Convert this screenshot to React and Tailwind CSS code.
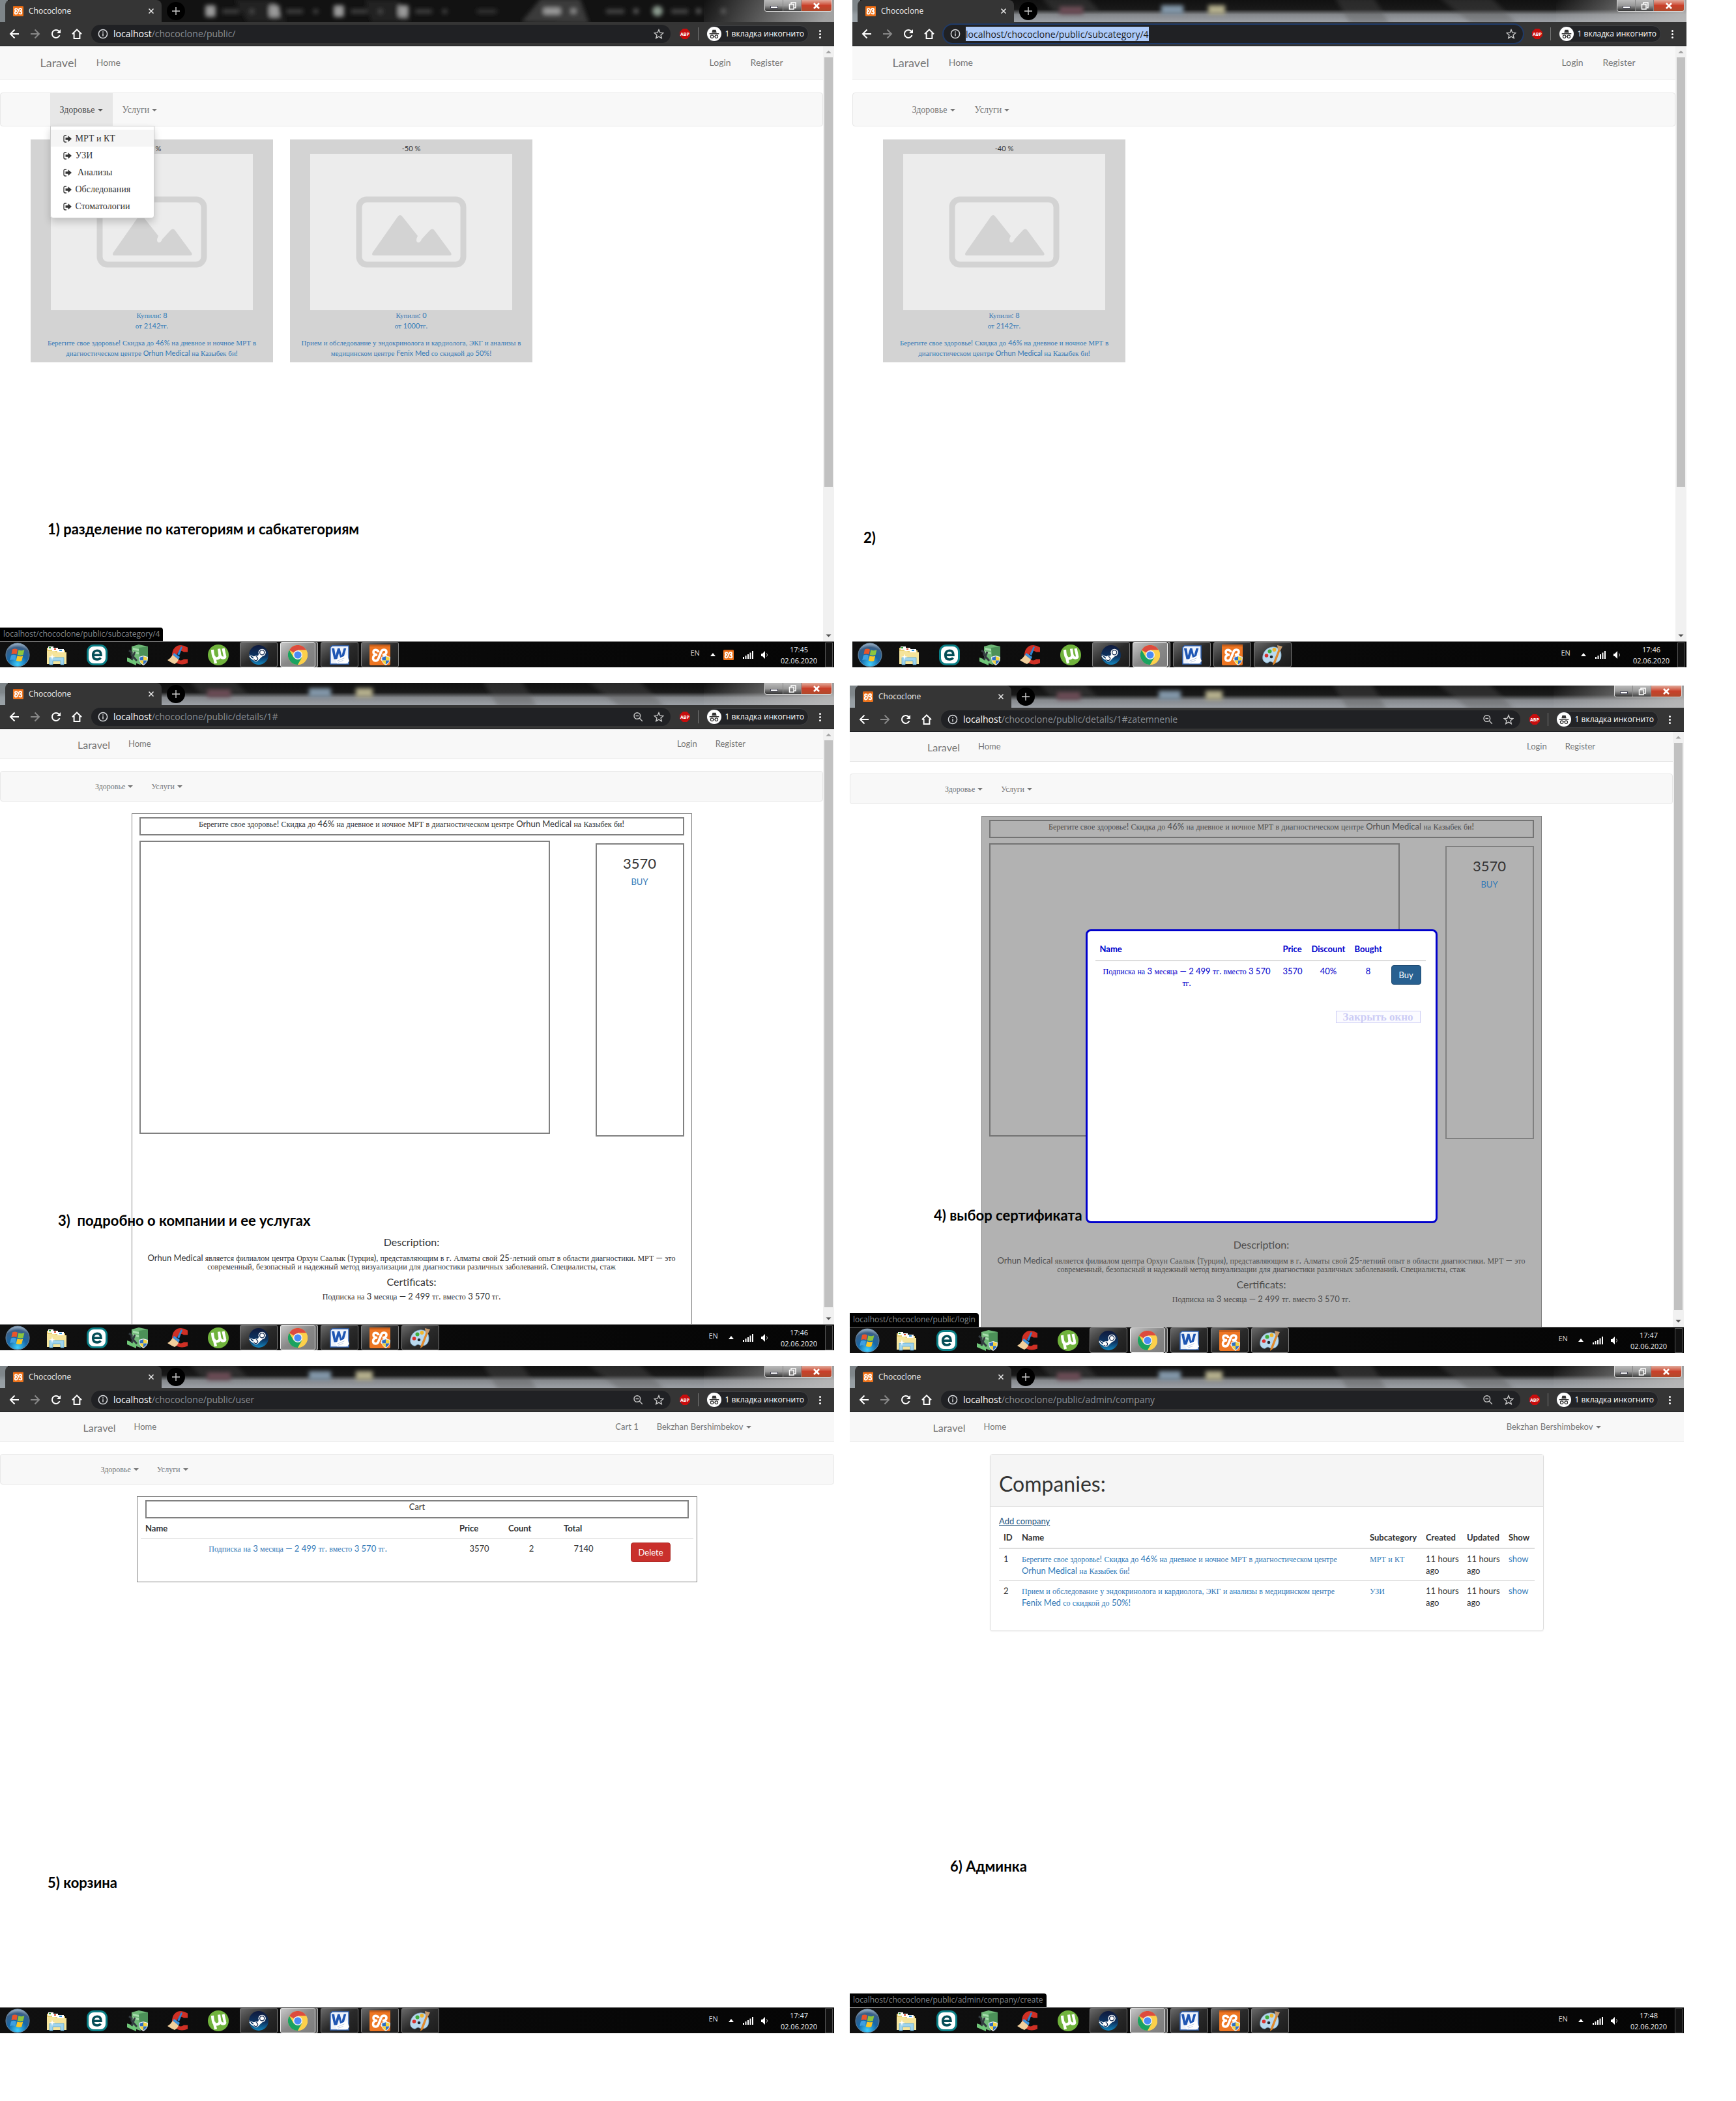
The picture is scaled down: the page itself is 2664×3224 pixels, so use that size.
import React from "react";

const SERIF = "font-['Liberation_Serif',serif]";

/* Cyrillic runs use the serif face, everything else inherits the page face. */
function Mixed({ small, children }) {
  return String(children)
    .split(/([А-Яа-яЁё]+)/)
    .map((part, i) =>
      i % 2 ? (
        <span key={i} className={small ? SERIF + " text-[12px] leading-none" : SERIF}>
          {part}
        </span>
      ) : (
        part
      )
    );
}

/* ---------- browser glyphs ---------- */

function Xampp({ className }) {
  return (
    <svg viewBox="0 0 32 32" className={className} aria-hidden="true">
      <rect width="32" height="32" rx="3" fill="#ee741c" />
      <rect x="2" y="1" width="28" height="3" fill="#c9540c" opacity=".7" />
      <path
        d="M14 12C13 7 6 7 6 11.500c0 3 3 4 6 4.300C8 16 5.500 18 5.500 21c0 5 6.500 5 8 1L18 11c1.500-4 8-4 8 .5 0 3-3 4-6 4.300 4 .2 6.500 2 6.500 5.200 0 5-6.500 5-8 .5"
        fill="none"
        stroke="#fff"
        strokeWidth="3.800"
      />
    </svg>
  );
}

const line = { fill: "none", stroke: "currentColor", strokeWidth: 2 };

function Back({ className }) {
  return (
    <svg viewBox="0 0 16 16" className={className} {...line}>
      <path d="M15 8H2.500M8.500 1.500 2 8l6.500 6.500" />
    </svg>
  );
}
function Forward({ className }) {
  return (
    <svg viewBox="0 0 16 16" className={className} {...line}>
      <path d="M1 8h12.500M7.500 1.500 14 8l-6.500 6.500" />
    </svg>
  );
}
function Reload({ className }) {
  return (
    <svg viewBox="0 0 16 16" className={className} {...line}>
      <path d="M13.500 10.200A6 6 0 1 1 12.300 3.800L14 5.500" />
      <path d="M15 1v6H9z" fill="currentColor" stroke="none" />
    </svg>
  );
}
function Home({ className }) {
  return (
    <svg viewBox="0 0 16 16" className={className} {...line}>
      <path d="M1 8.200 8 1.400l7 6.800M3.600 7v8h8.800V7" />
    </svg>
  );
}
function Info({ className }) {
  return (
    <svg viewBox="0 0 16 16" className={className} fill="none" stroke="currentColor" strokeWidth="1.500">
      <circle cx="8" cy="8" r="6.600" />
      <path d="M8 7.200v4.300M8 4.300v1.600" />
    </svg>
  );
}
function ZoomOut({ className }) {
  return (
    <svg viewBox="0 0 16 16" className={className} fill="none" stroke="currentColor" strokeWidth="1.400">
      <circle cx="6.800" cy="6.500" r="4.800" />
      <path d="M4.500 6.500h4.600M10.300 10l4.500 4.700" />
    </svg>
  );
}
function Star({ className }) {
  return (
    <svg viewBox="0 0 16 16" className={className} fill="none" stroke="currentColor" strokeWidth="1.400">
      <path d="m8 1.600 1.900 4.600 4.900.4-3.700 3.200 1.100 4.800L8 12.100l-4.200 2.500 1.100-4.800L1.200 6.600l4.900-.4z" />
    </svg>
  );
}
function Incognito({ className }) {
  return (
    <svg viewBox="0 0 24 24" className={className} aria-hidden="true">
      <circle cx="12" cy="12" r="12" fill="#fff" />
      <path d="M8 10.200 9.200 5.200h5.600l1.200 5zM4 11h16v1.500H4z" fill="#333" />
      <g fill="none" stroke="#333" strokeWidth="1.300">
        <circle cx="8.300" cy="16.500" r="2.400" />
        <circle cx="15.700" cy="16.500" r="2.400" />
        <path d="M10.700 16.200q1.300-.8 2.600 0" />
      </g>
    </svg>
  );
}

function Glass({ tabs }) {
  return (
    <svg
      viewBox="0 0 1280 34"
      preserveAspectRatio="none"
      className="absolute inset-0 h-full w-full"
      aria-hidden="true"
    >
      <defs>
        <linearGradient id="glassShade" x1="0" y1="0" x2="0" y2="1">
          <stop offset="0" stopColor="#111" />
          <stop offset=".42" stopColor="#191919" />
          <stop offset=".66" stopColor="#85888c" />
          <stop offset="1" stopColor="#9da1a7" />
        </linearGradient>
        <linearGradient id="glassEnd" x1="0" x2="1" y1="0" y2=".1">
          <stop offset="0" stopColor="#bbb" stopOpacity="0" />
          <stop offset="1" stopColor="#bbb" stopOpacity=".85" />
        </linearGradient>
        <filter id="soft" x="-50%" y="-50%" width="200%" height="200%">
          <feGaussianBlur stdDeviation="3" />
        </filter>
      </defs>
      <rect width="1280" height="34" fill={tabs ? "#121212" : "url(#glassShade)"} />
      {tabs ? (
        <g filter="url(#soft)">
          <path d="M800 34 830-2h60l14 38z" fill="#3a3a3a" />
          <path d="M360 0h60l20 34h-60zM560 0h50l20 34h-60z" fill="#222" />
          {[323, 421, 520, 619].map((x) => (
            <g key={x}>
              <rect x={x - 8} y="8" width="16" height="18" rx="3" fill="#999" />
              <rect x={x + 18} y="14" width="26" height="7" fill="#3c3c3c" />
              <rect x={x + 60} y="14" width="7" height="7" fill="#444" />
            </g>
          ))}
          <rect x="732" y="14" width="30" height="7" fill="#333" />
          <rect x="834" y="12" width="26" height="10" fill="#999" />
          <rect x="876" y="13" width="8" height="8" fill="#888" />
          <rect x="930" y="14" width="28" height="7" fill="#444" />
          <rect x="972" y="13" width="8" height="8" fill="#555" />
          <circle cx="1009" cy="17" r="8" fill="#8a9a8e" />
          <rect x="1030" y="14" width="26" height="7" fill="#444" />
          <rect x="1068" y="13" width="8" height="8" fill="#555" />
          <rect x="1106" y="13" width="8" height="8" fill="#444" />
        </g>
      ) : (
        <g filter="url(#soft)">
          <path d="M290-4h70l20 22h-70zM740-4h60l24 40h-60zM900-4h80l40 40h-70z" fill="#555" opacity=".35" />
          <rect x="318" y="10" width="36" height="12" fill="#6b4b55" />
          <rect x="474" y="8" width="34" height="14" fill="#8296a8" />
          <rect x="546" y="8" width="26" height="14" fill="#b3ae8c" />
        </g>
      )}
      <rect x="1080" width="200" height="34" fill="url(#glassEnd)" />
      <rect width="12" height="34" fill="#9aa2a8" opacity=".8" />
    </svg>
  );
}

function Chrome({ host, path, selected, zoomed, tabs }) {
  return (
    <header className="font-['Open_Sans',sans-serif]">
      <div className="relative flex h-[34px] overflow-hidden bg-[#111]">
        <Glass tabs={tabs} />
        <div className="relative ml-2 flex w-[240px] shrink-0 items-center rounded-t-lg bg-[#353535] pl-3 pr-3 text-xs text-[#f1f1f1]">
          <Xampp className="h-4 w-4" />
          <span className="ml-2 flex-1">Chococlone</span>
          <button aria-label="Закрыть вкладку" className="p-0">
            <svg viewBox="0 0 8 8" className="h-2 w-2" stroke="#eee" strokeWidth="1.500">
              <path d="m.5.5 7 7m0-7-7 7" />
            </svg>
          </button>
        </div>
        <button
          aria-label="Новая вкладка"
          className="relative ml-2 mt-[3px] grid h-7 w-7 place-items-center rounded-full bg-black"
        >
          <svg viewBox="0 0 12 12" className="h-3 w-3" stroke="#ccc" strokeWidth="1.400">
            <path d="M6 0v12M0 6h12" />
          </svg>
        </button>
        <div className="relative ml-auto mr-[3px] flex h-[18px] overflow-hidden rounded-b border border-t-0 border-[#d8d8d8]">
          <button
            aria-label="Свернуть"
            className="grid w-7 place-items-center border-r border-[#888] bg-linear-to-b from-[#bbb] via-[#999] to-[#333]"
          >
            <span className="mt-1 h-1 w-3 border border-[#445] bg-white" />
          </button>
          <button
            aria-label="Свернуть в окно"
            className="grid w-7 place-items-center border-r border-[#888] bg-linear-to-b from-[#bbb] via-[#999] to-[#444]"
          >
            <svg viewBox="0 0 12 12" className="h-3 w-3" fill="none" stroke="#fff" strokeWidth="1.500">
              <path d="M4 3V1h7v8H9" />
              <path d="M1.500 3.500h6.500v7.500H1.500z" />
            </svg>
          </button>
          <button
            aria-label="Закрыть"
            className="grid w-[46px] place-items-center bg-linear-to-b from-[#e0aa9c] via-[#c9402a] to-[#b04a2c]"
          >
            <svg viewBox="0 0 12 10" className="h-[10px] w-3" stroke="#fff" strokeWidth="2.600">
              <path d="m2 1 8 8m0-8-8 8" />
            </svg>
          </button>
        </div>
      </div>
      <div className="flex h-[37px] items-center border-b border-[#202124] bg-[#353535] pl-3.5 text-white">
        <button aria-label="Назад">
          <Back className="h-4 w-4" />
        </button>
        <button aria-label="Вперёд" className="ml-4 text-[#888]">
          <Forward className="h-4 w-4" />
        </button>
        <button aria-label="Обновить" className="ml-4">
          <Reload className="h-4 w-4" />
        </button>
        <button aria-label="Домой" className="ml-4">
          <Home className="h-4 w-4" />
        </button>
        <label
          className={
            selected
              ? "ml-3.5 flex h-7 min-w-0 flex-1 items-center rounded-full bg-[#202124] pl-2.5 pr-2.5 text-sm outline-2 outline-[#1f3a68]"
              : "ml-3.5 flex h-7 min-w-0 flex-1 items-center rounded-full bg-[#202124] pl-2.5 pr-2.5 text-sm"
          }
        >
          <Info className="mr-2 h-4 w-4 text-[#dadce0]" />
          {selected ? (
            <>
              <input
                aria-label="Адрес"
                defaultValue={host + path}
                className="field-sizing-content h-[22px] bg-[#aecbfa] text-[#202124] outline-none"
              />
              <span className="flex-1" />
            </>
          ) : (
            <>
              <span>{host}</span>
              <input
                aria-label="Адрес"
                defaultValue={path}
                className="min-w-0 flex-1 bg-transparent text-[#8b8f94] outline-none"
              />
            </>
          )}
          {zoomed && <ZoomOut className="mr-4 h-4 w-4 text-[#c8c8c8]" />}
          <Star className="h-4 w-4 text-[#c8c8c8]" />
        </label>
        <button aria-label="Adblock Plus" className="ml-3.5">
          <svg viewBox="0 0 16 16" className="h-4 w-4">
            <path d="M5 0h6l5 5v6l-5 5H5l-5-5V5z" fill="#c70d0d" />
            <text
              x="8"
              y="10.500"
              textAnchor="middle"
              fill="#fff"
              className="font-['Open_Sans',sans-serif] text-[7px] font-bold"
            >
              ABP
            </text>
          </svg>
        </button>
        <span className="ml-3 h-5 w-px bg-[#777]" />
        <button className="ml-3 flex h-[26px] items-center gap-1.5 rounded-full border border-[#3f4043] bg-[#222326] pr-1.5 text-xs whitespace-nowrap">
          <Incognito className="h-[22px] w-[22px]" />1 вкладка инкогнито
        </button>
        <button aria-label="Меню" className="ml-4 mr-5 grid gap-0.5">
          <i className="h-[3px] w-[3px] rounded-full bg-white" />
          <i className="h-[3px] w-[3px] rounded-full bg-white" />
          <i className="h-[3px] w-[3px] rounded-full bg-white" />
        </button>
      </div>
    </header>
  );
}

function Scrollbar({ thumb }) {
  return (
    <div className="flex w-[17px] shrink-0 flex-col bg-[#f1f1f1]" aria-hidden="true">
      <svg viewBox="0 0 17 17" className="h-[17px] w-[17px]">
        <path d="M4.500 10.500h8L8.500 6.500z" fill="#a3a3a3" />
      </svg>
      <div className="flex-1">
        <div className="mx-0.5 bg-[#c1c1c1]" style={{ height: thumb }} />
      </div>
      <svg viewBox="0 0 17 17" className="h-[17px] w-[17px]">
        <path d="M4.500 6.500h8L8.500 10.500z" fill="#505050" />
      </svg>
    </div>
  );
}

/* ---------- taskbar ---------- */

function Shield() {
  return (
    <g transform="translate(18 17)">
      <path d="M0 2 7 0l7 2c0 6-2 10-7 13C2 12 0 8 0 2z" fill="#e8eef5" />
      <path d="M1.200 3 7 1.300V7.500H1.700z" fill="#2f6fc4" />
      <path d="M12.800 3 7 1.300V7.500h5.300z" fill="#f5d33a" />
      <path d="M1.700 7.500H7v6C4 11.800 2.300 10 1.700 7.500z" fill="#f5d33a" />
      <path d="M12.300 7.500H7v6c3-1.700 4.700-3.500 5.300-6z" fill="#2f6fc4" />
    </g>
  );
}

function StartOrb() {
  return (
    <svg viewBox="0 0 38 38" className="h-[38px] w-[38px]">
      <defs>
        <radialGradient id="orb" cx=".5" cy=".9" r=".9">
          <stop offset="0" stopColor="#3fd0ff" />
          <stop offset=".45" stopColor="#1668a8" />
          <stop offset=".8" stopColor="#3b5f86" />
          <stop offset="1" stopColor="#a9bccd" />
        </radialGradient>
      </defs>
      <circle cx="19" cy="19" r="18" fill="url(#orb)" stroke="#6d8ba5" strokeWidth="1" />
      <path d="M11 10.500q4-2 8 .3l-1.600 7.500q-4-2-8 0z" fill="#e8552b" />
      <path d="M20.400 11.300q4 2 9 0l-1.900 7.600q-4.500 1.700-8.700-.2z" fill="#8cc63e" />
      <path d="M9 19.800q4-2 8 0l-1.800 7.500q-4-2-8 0z" fill="#3f9fe0" />
      <path d="M18.500 20.300q4.200 2 8.700.2l-1.900 7.400q-4.500 2-8.500-.2z" fill="#fcc625" />
    </svg>
  );
}
function Explorer() {
  return (
    <svg viewBox="0 0 32 32" className="h-8 w-8">
      <path d="M1 5h9l1 2h7l1 2h10v20H1z" fill="#e9cf72" />
      <path d="M3 3h8v5H3zM9 5h9v5H9zM17 7h10v5H17z" fill="#fff" />
      <path d="M4 4h3v2H4z" fill="#2aa02a" />
      <path d="M12 6h3v2h-3z" fill="#d8432a" />
      <path d="M20 8h4v2h-4z" fill="#2a8fd8" />
      <path d="M1 10h12l2 2h16v18H1z" fill="#f5e49b" />
      <path d="M5 31V20h22v11h-5v-6H10v6z" fill="#9fd4ee" stroke="#5ba7cf" strokeWidth=".8" />
      <path d="m9 14 1 4 4 1-4 1-1 4-1-4-4-1 4-1z" fill="#fff" />
    </svg>
  );
}
function Eset() {
  return (
    <svg viewBox="0 0 32 32" className="h-8 w-8">
      <rect width="32" height="32" rx="11" fill="#0a7f86" />
      <rect x="3" y="3" width="26" height="26" rx="8" fill="#fff" />
      <path
        d="M21.500 20.500Q19.500 23 16 23c-4.500 0-6.300-3-6.300-6.700 0-4.100 2.300-7 6.300-7s6 2.700 6 7H10.500"
        fill="none"
        stroke="#044e57"
        strokeWidth="3.600"
      />
    </svg>
  );
}
function Server() {
  return (
    <svg viewBox="0 0 32 32" className="h-8 w-8">
      <path d="M7 3 18 0l14 3v22l-12 6L7 26z" fill="#6fb877" />
      <path d="M18 5 32 3v22l-12 6z" fill="#4c9158" />
      <path d="m9 5 9 2v3L9 8zM9 10l9 2v3l-9-2z" fill="#a8dcae" />
      <path d="M0 20 14 25v7L0 26z" fill="#6fc678" />
      <path d="m3 9 4 3v4l8 9M12 11 7 24" stroke="#333b40" strokeWidth="3" fill="none" />
      <Shield />
    </svg>
  );
}
function CCleaner() {
  return (
    <svg viewBox="0 0 32 32" className="h-8 w-8">
      <path d="M31 4.500v7h-6q-5-4-9 1t0 10q4 4 9 0h6v6q-9 4-17 0-8-5-7-14T15 2q8-3 16 2.500z" fill="#cf3025" />
      <path d="M21 3 15 15l3 2 5-13z" fill="#2c84cf" />
      <path d="m10 13 9 6-2 4-9-7z" fill="#3b93dd" />
      <path d="M8 16q-3 5-8 8 6 4 11 6 5-3 6-7z" fill="#f1cf9c" />
    </svg>
  );
}
function UTorrent() {
  return (
    <svg viewBox="0 0 32 32" className="h-8 w-8">
      <circle cx="16" cy="16" r="16" fill="#70b33c" />
      <path
        d="M7 8q.5 8 2 11c2 4 9 3 9.500-2L17 6.500M18.500 16q1.500 5 5.500 4.500 3-.5 2-3L23.500 6M9.500 18l2.500 11"
        fill="none"
        stroke="#fff"
        strokeWidth="4.200"
      />
    </svg>
  );
}
function Steam() {
  return (
    <svg viewBox="0 0 32 32" className="h-[30px] w-[30px]">
      <defs>
        <linearGradient id="steam" x1="0" x2="0" y1="0" y2="1">
          <stop offset="0" stopColor="#101a3c" />
          <stop offset=".6" stopColor="#0d3664" />
          <stop offset="1" stopColor="#1287c0" />
        </linearGradient>
      </defs>
      <circle cx="16" cy="16" r="16" fill="url(#steam)" />
      <path d="m0 15 9 4 6-2 3-7 8 5-7 6-4 4z" fill="#fff" />
      <circle cx="21.500" cy="12" r="6" fill="#fff" />
      <circle cx="21.500" cy="12" r="3.800" fill="#fff" stroke="#12294f" strokeWidth="1.400" />
      <path d="M1 17.500q2 4 6 6" stroke="#fff" strokeWidth="2" fill="none" />
      <circle cx="11.500" cy="22" r="4.600" fill="#fff" />
      <path d="M8.500 23.500a3.200 3.200 0 1 0 3-4.700" fill="none" stroke="#12294f" strokeWidth="1.400" />
    </svg>
  );
}
function ChromeLogo() {
  return (
    <svg viewBox="0 0 32 32" className="h-[30px] w-[30px]">
      <circle cx="16" cy="16" r="16" fill="#fcd04b" />
      <path d="M16 16 2.100 8A16 16 0 0 1 29.900 8H16z" fill="#dd4b3e" />
      <path d="M2.100 8A16 16 0 0 0 16 32l7-12-7-4-7 4z" fill="#1aa260" />
      <path d="M29.900 8H16l7 12-7 12A16 16 0 0 0 29.900 8z" fill="#fcd04b" />
      <circle cx="16" cy="16" r="7.500" fill="#f4f4f4" />
      <circle cx="16" cy="16" r="5.900" fill="#4a8af4" />
    </svg>
  );
}
function Word() {
  return (
    <svg viewBox="0 0 32 32" className="h-[30px] w-[30px]">
      <path d="M4 1h27v30H1V4z" fill="#eef3fb" stroke="#2c5fb0" strokeWidth="1.600" />
      <path d="m3 5 4 18h5l3-10 3 10h4l5-18h-4l-3.500 12L16.500 5h-3.500L9.500 17 7.500 5z" fill="#1e56b4" />
      <path d="m9 24 19-8 4 10-5 4H12z" fill="#fff" />
      <path d="m12 26 12-5M14 28l8-3" stroke="#b9c8e2" />
    </svg>
  );
}
function XamppLarge() {
  return (
    <svg viewBox="0 0 32 32" className="h-8 w-8">
      <rect width="32" height="32" rx="2" fill="#ee7622" />
      <rect y="0" width="32" height="3" fill="#c85f1a" />
      <path
        d="M14 12C13 7 6 7 6 11.500c0 3 3 4 6 4.300C8 16 5.500 18 5.500 21c0 5 6.500 5 8 1L18 11c1.500-4 8-4 8 .5 0 3-3 4-6 4.300 4 .2 6.500 2 6.500 5.200 0 5-6.500 5-8 .5"
        fill="none"
        stroke="#fff"
        strokeWidth="3.600"
      />
      <Shield />
    </svg>
  );
}
function Paint() {
  return (
    <svg viewBox="0 0 32 32" className="h-8 w-8">
      <path
        d="M15 4c8-1 14 4 14 12s-4 12-10 12c-4 0-4-2-7-2-3 1-3 3-6 2C1 26 0 22 1 17 3 9 8 5 15 4z"
        fill="#b9d9ee"
        stroke="#7faac6"
        strokeWidth=".8"
      />
      <circle cx="6.500" cy="17" r="2.800" fill="#d9302c" />
      <circle cx="11.500" cy="10.500" r="3" fill="#3fae3c" />
      <circle cx="18.500" cy="8" r="2.900" fill="#f0b62d" />
      <circle cx="14" cy="19" r="2.300" fill="#1d2a33" />
      <path d="m25 7 3 1-8 21-4 3 1-5z" fill="#e08a2e" />
      <path d="m23 1 8 2-3 6-4-1z" fill="#c79a6c" />
    </svg>
  );
}

function Pin({ label, children }) {
  return (
    <button aria-label={label} className="grid w-[58px] place-items-center">
      {children}
    </button>
  );
}
function Running({ label, children }) {
  return (
    <button
      aria-label={label}
      className="grid w-[58px] place-items-center rounded-[3px] border border-[#7d7d7d] bg-linear-to-br from-[#6a6a6a] via-[#2a2a2a] to-[#1c1c1c]"
    >
      {children}
    </button>
  );
}

function Taskbar({ time, paint, tray }) {
  return (
    <footer className="flex h-10 gap-1 border-t border-[#7a7a7a] bg-[#0c0c0c] bg-linear-to-r from-[#101010] via-[#0a0a0a] to-[#050505] font-['Open_Sans',sans-serif] text-white">
      <button aria-label="Пуск" className="grid w-[54px] place-items-center">
        <StartOrb />
      </button>
      <Pin label="Проводник">
        <Explorer />
      </Pin>
      <Pin label="ESET">
        <Eset />
      </Pin>
      <Pin label="Сервер">
        <Server />
      </Pin>
      <Pin label="CCleaner">
        <CCleaner />
      </Pin>
      <Pin label="uTorrent">
        <UTorrent />
      </Pin>
      <Running label="Steam">
        <Steam />
      </Running>
      <span className="flex w-[58px]">
        <button
          aria-label="Chrome"
          className="grid flex-1 place-items-center rounded-[3px] border border-[#f2f2f2] bg-linear-to-br from-[#c8c8c8] via-[#888] to-[#7c7c7c]"
        >
          <ChromeLogo />
        </button>
        <i className="w-1 rounded-r-[3px] border-y border-r border-[#b5b5b5] bg-[#555]" />
      </span>
      <Running label="Word">
        <Word />
      </Running>
      <Running label="XAMPP">
        <XamppLarge />
      </Running>
      {paint && (
        <Running label="Paint">
          <Paint />
        </Running>
      )}
      <div className="mr-0.5 ml-auto flex items-center text-[11px]">
        <span className="pb-1 text-[#ddd]">EN</span>
        <svg viewBox="0 0 8 5" className="ml-4 h-[5px] w-2">
          <path d="M0 5 4 0l4 5z" fill="#fff" />
        </svg>
        {tray && <Xampp className="ml-3 h-4 w-4" />}
        <svg viewBox="0 0 16 12" className="ml-3.5 h-3 w-4" fill="#fff">
          <path d="M0 9h2v3H0zM3.500 7h2v5h-2zM7 5h2v7H7zM10.500 2.500h2V12h-2zM14 0h2v12h-2z" />
        </svg>
        <svg viewBox="0 0 12 12" className="ml-3 h-3 w-3">
          <path d="M0 4h2l4-4v12L2 8H0z" fill="#fff" />
          <path d="M8.500 3.500q2 2.500 0 5" stroke="#ccc" fill="none" />
        </svg>
        <time className="ml-[18px] text-center leading-[17px] text-[#eee]">
          {time}
          <br />
          02.06.2020
        </time>
        <i className="ml-3 h-[38px] w-3 border border-[#555] bg-[#111]" />
      </div>
    </footer>
  );
}

/* ---------- site parts ---------- */

function Caret() {
  return (
    <svg viewBox="0 0 8 4" className="ml-1 inline-block h-1 w-2 align-middle" fill="currentColor">
      <path d="M0 0h8L4 4z" />
    </svg>
  );
}

function TopNav({ compact, children }) {
  return (
    <nav
      className={
        compact
          ? "mb-[18px] border-b border-[#e7e7e7] bg-[#f8f8f8] text-[13px] text-[#777]"
          : "mb-5 border-b border-[#e7e7e7] bg-[#f8f8f8] text-sm text-[#777]"
      }
    >
      <div
        className={
          compact
            ? "mx-auto flex h-[45px] max-w-[1053px] items-center gap-7 px-[14px]"
            : "mx-auto flex h-[50px] max-w-[1170px] items-center gap-[30px] px-[15px]"
        }
      >
        <a href="#laravel" className={compact ? "pt-0.5 text-base" : "text-lg"}>
          Laravel
        </a>
        <a href="#home" className="flex-1">
          Home
        </a>
        {children}
      </div>
    </nav>
  );
}

function GuestLinks() {
  return (
    <>
      <a href="#login">Login</a>
      <a href="#register">Register</a>
    </>
  );
}

const MENU = ["МРТ и КТ", "УЗИ", "\u00a0Анализы", "Обследования", "Стоматологии"];

function CategoryNav({ compact, open }) {
  return (
    <nav
      className={
        compact
          ? "mb-[18px] rounded border border-[#e7e7e7] bg-[#f8f8f8] text-[13px] text-[#777]"
          : "mb-5 rounded border border-[#e7e7e7] bg-[#f8f8f8] text-sm text-[#777]"
      }
    >
      <div className={compact ? "mx-auto max-w-[1053px] px-[27px]" : "mx-auto max-w-[1170px] px-[30px]"}>
        <ul className={compact ? "flex h-[45px]" : "flex h-[50px]"}>
          <li className={open ? "relative bg-[#e7e7e7] text-[#555]" : "relative"}>
            <button className={compact ? "h-full px-[14px]" : "h-full px-[15px]"}>
              <Mixed small={compact}>Здоровье</Mixed>
              <Caret />
            </button>
            {open && (
              <ul className="absolute top-full left-0 z-10 w-40 rounded-b border border-[#ccc] bg-white py-[5px] text-[#333] shadow-[0_6px_12px_rgba(0,0,0,0.18)]">
                {MENU.map((item, i) => (
                  <li key={item} className={i === 0 ? "bg-[#f5f5f5]" : ""}>
                    <a href="#sub" className="flex h-[26px] items-center gap-1.5 pt-0.5 pl-[19px]">
                      <svg viewBox="0 0 13 12" className="h-3 w-[13px]">
                        <path d="M5 1H3Q1 1 1 3v6q0 2 2 2h2" fill="none" stroke="#333" strokeWidth="1.300" />
                        <path d="M3.500 4.200H7.500V1.200L13 6 7.500 10.800V7.800h-4z" fill="#333" />
                      </svg>
                      <span className={SERIF}>{item}</span>
                    </a>
                  </li>
                ))}
              </ul>
            )}
          </li>
          <li>
            <button className={compact ? "h-full px-[14px]" : "h-full px-[15px]"}>
              <Mixed small={compact}>Услуги</Mixed>
              <Caret />
            </button>
          </li>
        </ul>
      </div>
    </nav>
  );
}

function Placeholder() {
  return (
    <svg viewBox="0 0 310 240" className="mx-auto block h-60 w-[310px] bg-[#ececec]" aria-hidden="true">
      <rect x="75" y="70" width="160" height="100" rx="12" fill="none" stroke="#d3d3d3" strokeWidth="9" />
      <path
        d="M98 156q-4 0-2.500-4L134 97q4-6 8 0l23 29q-4 8 0 10 4 1 6-5l13-14q4-4 7 1l25 34q2 4-2 4z"
        fill="#d3d3d3"
      />
    </svg>
  );
}

function Deal({ discount, bought, price, children }) {
  return (
    <article className="w-[372px] bg-[#d3d3d3] px-2 pt-1.5 pb-1.5 text-center text-[11px] leading-4 text-[#333]">
      <p>{discount}</p>
      <Placeholder />
      <a href="#deal" className="block text-[#337ab7]">
        <p>
          <Mixed>{bought}</Mixed>
        </p>
        <p>
          <Mixed>{price}</Mixed>
        </p>
        <p className="mt-2.5">
          <Mixed>{children}</Mixed>
        </p>
      </a>
    </article>
  );
}

const ORHUN =
  "Берегите свое здоровье! Скидка до 46% на дневное и ночное МРТ в диагностическом центре Orhun Medical на Казыбек би!";
const FENIX =
  "Прием и обследование у эндокринолога и кардиолога, ЭКГ и анализы в медицинском центре Fenix Med со скидкой до 50%!";
const CERT = "Подписка на 3 месяца — 2 499 тг. вместо 3 570 тг.";

function Details({ modal }) {
  return (
    <main className="relative mx-auto flex w-full max-w-[860px] flex-1 flex-col border border-b-0 border-[#808080] px-[11px] pt-[5px] text-center text-[13px] text-[#333]">
      <h1 className="h-7 border-2 border-[#808080] text-[13px] leading-4">
        <Mixed small>{ORHUN}</Mixed>
      </h1>
      <div className="mt-2 flex justify-between">
        <div className="h-[450px] w-[630px] border-2 border-[#808080]" />
        <aside className="relative z-10 mt-1 h-[450px] w-[136px] border-2 border-[#808080] pt-4">
          <p className="text-[22px] leading-[26px]">3570</p>
          <a href="#buy" className="mt-1.5 block text-[#337ab7]">
            BUY
          </a>
        </aside>
      </div>
      <h2 className="mt-[152px] text-base leading-5">Description:</h2>
      <p className="mt-2 leading-[13px]">
        <Mixed small>
          Orhun Medical является филиалом центра Орхун Саалык (Турция), представляющим в г. Алматы свой 25-летний опыт в
          области диагностики. МРТ — это современный, безопасный и надежный метод визуализации для диагностики различных
          заболеваний. Специалисты, стаж
        </Mixed>
      </p>
      <h2 className="mt-[7px] text-base leading-5">Certificats:</h2>
      <p className="mt-1.5 leading-[13px]">
        <Mixed small>{CERT}</Mixed>
      </p>
      {modal && (
        <>
          <div className="absolute inset-0 bg-[#666666]/50" />
          <section
            role="dialog"
            aria-label="Certificats"
            className="absolute top-[173px] left-[159px] z-20 h-[451px] w-[540px] rounded-lg border-[3px] border-[#0000cc] bg-white pt-3 pr-[15px] pl-3 text-[#0000cc]"
          >
            <table className="w-full table-fixed">
              <thead>
                <tr className="border-b-2 border-[#ddd] text-left">
                  <th className="px-[7px] py-[6px]">Name</th>
                  <th className="w-11 px-[7px] py-[6px]">Price</th>
                  <th className="w-[66px] px-[7px] py-[6px]">Discount</th>
                  <th className="w-14 px-[7px] py-[6px]">Bought</th>
                  <th className="w-[60px]" />
                </tr>
              </thead>
              <tbody>
                <tr className="align-top leading-[18px]">
                  <td className="px-2.5 py-[6px]">
                    <Mixed small>{CERT}</Mixed>
                  </td>
                  <td className="py-[6px]">3570</td>
                  <td className="py-[6px]">40%</td>
                  <td className="py-[6px]">8</td>
                  <td className="px-[7px] py-[6px]">
                    <button className="h-[30px] w-[46px] rounded border border-[#204d74] bg-[#286090] text-white">
                      Buy
                    </button>
                  </td>
                </tr>
              </tbody>
            </table>
            <a
              href="#close"
              className="mt-7 mr-2 ml-auto block w-[130px] border border-[#ccccf5] bg-[#fbfbff] font-['Liberation_Serif',serif] text-[17px] leading-[17px] font-bold text-[#ccccf5]"
            >
              Закрыть окно
            </a>
          </section>
        </>
      )}
    </main>
  );
}

function Cart() {
  return (
    <main className="mx-auto mb-[447px] w-full max-w-[860px] border border-[#808080] px-[5px] pt-[5px] pb-6 text-[13px] leading-[18px] text-[#333]">
      <h1 className="mx-[7px] h-7 border-2 border-[#808080] text-center leading-4">Cart</h1>
      <table className="w-full table-fixed text-center">
        <thead>
          <tr className="border-b border-[#ddd] text-left">
            <th className="px-[7px] py-[6px]">Name</th>
            <th className="w-[75px] px-[7px] py-[6px]">Price</th>
            <th className="w-[85px] px-[7px] py-[6px]">Count</th>
            <th className="w-[75px] px-[7px] py-[6px]">Total</th>
            <th className="w-[131px]" />
          </tr>
        </thead>
        <tbody>
          <tr className="align-top">
            <td className="px-[7px] py-[6px]">
              <a href="#cert" className="text-[#337ab7]">
                <Mixed small>{CERT}</Mixed>
              </a>
            </td>
            <td className="px-[7px] py-[6px]">3570</td>
            <td className="px-[7px] py-[6px]">2</td>
            <td className="px-[7px] py-[6px]">7140</td>
            <td className="px-[7px] py-[6px]">
              <button className="h-[30px] w-[61px] rounded border border-[#ac2925] bg-[#c9302c] text-white">
                Delete
              </button>
            </td>
          </tr>
        </tbody>
      </table>
    </main>
  );
}

const COMPANIES = [
  { id: 1, name: ORHUN, sub: "МРТ и КТ" },
  { id: 2, name: FENIX, sub: "УЗИ" },
];

function Companies() {
  return (
    <main className="mx-auto mb-[347px] w-full max-w-[850px] rounded border border-[#ddd] text-[13px] leading-[18px] text-[#333] shadow-xs">
      <h1 className="flex h-20 items-center border-b border-[#ddd] bg-[#f5f5f5] px-[13px] pt-2.5 text-[32px]">
        Companies:
      </h1>
      <div className="px-[13px] pt-[13px] pb-7">
        <a href="#add" className="text-[#23527c] underline">
          Add company
        </a>
        <table className="w-full table-fixed text-left">
          <thead>
            <tr className="border-b-2 border-[#ddd]">
              <th className="w-[28px] p-[7px]">ID</th>
              <th className="p-[7px]">Name</th>
              <th className="w-[86px] p-[7px]">Subcategory</th>
              <th className="w-[63px] p-[7px]">Created</th>
              <th className="w-[64px] p-[7px]">Updated</th>
              <th className="w-[47px] p-[7px]">Show</th>
            </tr>
          </thead>
          <tbody>
            {COMPANIES.map((c) => (
              <tr key={c.id} className="border-b border-[#ddd] align-top last:border-0">
                <td className="px-[7px] py-[6px]">{c.id}</td>
                <td className="py-[6px] pr-4 pl-[7px]">
                  <a href="#company" className="text-[#337ab7]">
                    <Mixed small>{c.name}</Mixed>
                  </a>
                </td>
                <td className="px-[7px] py-[6px]">
                  <a href="#subcategory" className="text-[#337ab7]">
                    <Mixed small>{c.sub}</Mixed>
                  </a>
                </td>
                <td className="py-[6px] pl-[7px]">11 hours ago</td>
                <td className="py-[6px] pl-[7px]">11 hours ago</td>
                <td className="px-[7px] py-[6px]">
                  <a href="#show" className="text-[#337ab7]">
                    show
                  </a>
                </td>
              </tr>
            ))}
          </tbody>
        </table>
      </div>
    </main>
  );
}

/* ---------- screens ---------- */

function Screen({ chrome, taskbar, scroll, status, className = "", children }) {
  return (
    <section className={"min-w-0 flex-1 self-start bg-white " + className}>
      <Chrome host="localhost" {...chrome} />
      <div className="relative flex min-h-[913px]">
        <div className="relative flex min-w-0 flex-1 flex-col">{children}</div>
        {scroll && <Scrollbar thumb={scroll} />}
        {status && (
          <div className="absolute bottom-0 left-0 z-30 h-[21px] rounded-tr bg-black px-[5px] font-['Open_Sans',sans-serif] text-xs leading-[20px] text-[#85888c]">
            {status}
          </div>
        )}
      </div>
      <Taskbar {...taskbar} />
    </section>
  );
}

const CAPTION = "font-['Lato',sans-serif] text-[22px] leading-7 font-bold whitespace-pre text-black ";

export default function App() {
  return (
    <div className="flex min-h-screen flex-col bg-white font-['Lato',sans-serif]">
      <div className="mb-6 flex gap-7 pr-[76px]">
        <Screen
          chrome={{ path: "/chococlone/public/", tabs: true }}
          taskbar={{ time: "17:45", tray: true }}
          scroll="75%"
          status="localhost/chococlone/public/subcategory/4"
        >
          <TopNav>
            <GuestLinks />
          </TopNav>
          <CategoryNav open />
          <main className="flex gap-[26px] pl-[47px]">
            <Deal discount="-40 %" bought="Купили: 8" price="от 2142тг.">
              {ORHUN}
            </Deal>
            <Deal discount="-50 %" bought="Купили: 0" price="от 1000тг.">
              {FENIX}
            </Deal>
          </main>
          <p className={CAPTION + "mt-[242px] ml-[73px]"}>1) разделение по категориям и сабкатегориям</p>
        </Screen>
        <Screen
          chrome={{ path: "/chococlone/public/subcategory/4", selected: true }}
          taskbar={{ time: "17:46", paint: true }}
          scroll="75%"
        >
          <TopNav>
            <GuestLinks />
          </TopNav>
          <CategoryNav />
          <main className="flex pl-[47px]">
            <Deal discount="-40 %" bought="Купили: 8" price="от 2142тг.">
              {ORHUN}
            </Deal>
          </main>
          <p className={CAPTION + "mt-[255px] ml-[17px]"}>2)</p>
        </Screen>
      </div>

      <div className="mb-5 flex gap-6 pr-20">
        <Screen
          chrome={{ path: "/chococlone/public/details/1#", zoomed: true }}
          taskbar={{ time: "17:46", paint: true }}
          scroll="99%"
        >
          <TopNav compact>
            <GuestLinks />
          </TopNav>
          <CategoryNav compact />
          <Details />
          <p className={CAPTION + "absolute top-[740px] left-[89px]"}>3)  подробно о компании и ее услугах</p>
        </Screen>
        <Screen
          className="mt-1"
          chrome={{ path: "/chococlone/public/details/1#zatemnenie", zoomed: true }}
          taskbar={{ time: "17:47", paint: true }}
          scroll="99%"
          status="localhost/chococlone/public/login"
        >
          <TopNav compact>
            <GuestLinks />
          </TopNav>
          <CategoryNav compact />
          <Details modal />
          <p className={CAPTION + "absolute top-[728px] left-[129px]"}>4) выбор сертификата</p>
        </Screen>
      </div>

      <div className="flex gap-6 pr-20">
        <Screen
          chrome={{ path: "/chococlone/public/user", zoomed: true }}
          taskbar={{ time: "17:47", paint: true }}
        >
          <TopNav compact>
            <a href="#cart">Cart 1</a>
            <button>
              Bekzhan Bershimbekov
              <Caret />
            </button>
          </TopNav>
          <CategoryNav compact />
          <Cart />
          <p className={CAPTION + "ml-[73px]"}>5) корзина</p>
        </Screen>
        <Screen
          chrome={{ path: "/chococlone/public/admin/company", zoomed: true }}
          taskbar={{ time: "17:48", paint: true }}
          status="localhost/chococlone/public/admin/company/create"
        >
          <TopNav compact>
            <button>
              Bekzhan Bershimbekov
              <Caret />
            </button>
          </TopNav>
          <Companies />
          <p className={CAPTION + "ml-[154px]"}>6) Админка</p>
        </Screen>
      </div>
    </div>
  );
}
